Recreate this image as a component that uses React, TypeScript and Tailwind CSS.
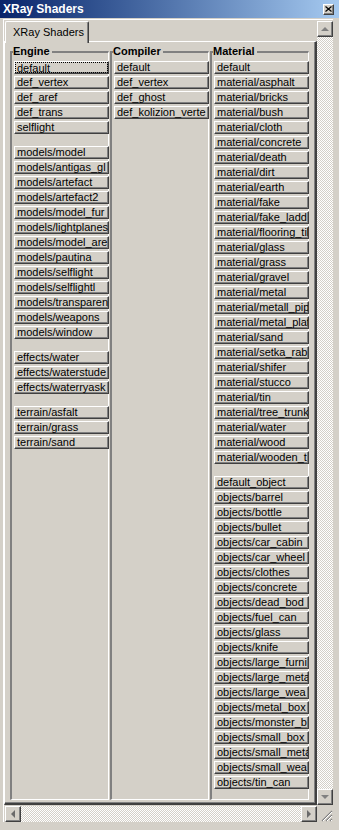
import clsx from 'clsx';

const ENGINE: string[][] = [
  ['default', 'def_vertex', 'def_aref', 'def_trans', 'selflight'],
  [
    'models/model',
    'models/antigas_gl',
    'models/artefact',
    'models/artefact2',
    'models/model_fur',
    'models/lightplanes',
    'models/model_are',
    'models/pautina',
    'models/selflight',
    'models/selflightl',
    'models/transparen',
    'models/weapons',
    'models/window',
  ],
  ['effects/water', 'effects/waterstude', 'effects/waterryask'],
  ['terrain/asfalt', 'terrain/grass', 'terrain/sand'],
];

const COMPILER: string[][] = [['default', 'def_vertex', 'def_ghost', 'def_kolizion_verte']];

const MATERIAL: string[][] = [
  [
    'default',
    'material/asphalt',
    'material/bricks',
    'material/bush',
    'material/cloth',
    'material/concrete',
    'material/death',
    'material/dirt',
    'material/earth',
    'material/fake',
    'material/fake_ladd',
    'material/flooring_til',
    'material/glass',
    'material/grass',
    'material/gravel',
    'material/metal',
    'material/metall_pip',
    'material/metal_plat',
    'material/sand',
    'material/setka_rab',
    'material/shifer',
    'material/stucco',
    'material/tin',
    'material/tree_trunk',
    'material/water',
    'material/wood',
    'material/wooden_t',
  ],
  [
    'default_object',
    'objects/barrel',
    'objects/bottle',
    'objects/bullet',
    'objects/car_cabin',
    'objects/car_wheel',
    'objects/clothes',
    'objects/concrete',
    'objects/dead_bod',
    'objects/fuel_can',
    'objects/glass',
    'objects/knife',
    'objects/large_furni',
    'objects/large_meta',
    'objects/large_wea',
    'objects/metal_box',
    'objects/monster_b',
    'objects/small_box',
    'objects/small_meta',
    'objects/small_wea',
    'objects/tin_can',
  ],
];

const raised =
  'border-t border-l border-t-white border-l-white border-b border-r border-b-[#404040] border-r-[#404040] shadow-[inset_-1px_-1px_0_#808080]';

function ShaderButton({ label, focused }: { label: string; focused?: boolean }) {
  return (
    <div className={clsx('h-[13px] w-[95px] ml-[1px] shrink-0 bg-[#d4d0c8] overflow-hidden', raised)}>
      <div
        className={clsx(
          'h-[11px] text-[11px] leading-[11px] whitespace-nowrap overflow-hidden text-black',
          focused ? 'border border-dotted border-black pl-[1px] leading-[9px]' : 'pl-[2px]'
        )}
      >
        {label}
      </div>
    </div>
  );
}

function ShaderColumn({ title, groups, focusFirst }: { title: string; groups: string[][]; focusFirst?: boolean }) {
  return (
    <fieldset className="min-w-0 m-0 p-0 pl-[1px] border-l-2 border-t-2 border-r border-b border-l-[#808080] border-t-[#808080] border-r-white border-b-white">
      <legend className="p-0 pr-[2px] text-[11px] leading-[11px] font-bold text-black">{title}</legend>
      <div className="flex flex-col gap-[12px] pt-[4px]">
        {groups.map((group, gi) => (
          <div key={gi} className="flex flex-col gap-[2px]">
            {group.map((label, i) => (
              <ShaderButton key={label + i} label={label} focused={focusFirst && gi === 0 && i === 0} />
            ))}
          </div>
        ))}
      </div>
    </fieldset>
  );
}

function Arrow({ dir }: { dir: 'up' | 'down' | 'left' | 'right' }) {
  const pts = {
    up: '4,1 0,5 8,5',
    down: '0,1 8,1 4,5',
    left: '5,0 5,8 1,4',
    right: '1,0 1,8 5,4',
  }[dir];
  const vertical = dir === 'up' || dir === 'down';
  return (
    <div className={clsx('w-[16px] h-[16px] shrink-0 bg-[#d4d0c8] flex items-center justify-center', raised)}>
      <svg width={vertical ? 8 : 6} height={vertical ? 6 : 8} viewBox={vertical ? '0 0 8 6' : '0 0 6 8'}>
        <polygon points={pts} fill={vertical ? '#808080' : '#6a6a6a'} />
      </svg>
    </div>
  );
}

const track =
  'bg-[repeating-conic-gradient(#ffffff_0%_25%,#d4d0c8_0%_50%)] [background-size:2px_2px]';

export default function App() {
  return (
    <div className="w-[339px] h-[830px] bg-[#d4d0c8] flex flex-col font-['Liberation_Sans',Arial,sans-serif] select-none overflow-hidden">
      {/* title bar */}
      <div className="h-[18px] shrink-0 flex items-center pl-[3px] pr-[5px] bg-gradient-to-r from-[#0a246a] to-[#a6caf0]">
        <span className="flex-1 text-white font-bold text-[12px] leading-[14px]">XRay Shaders</span>
        <div className={clsx('w-[11px] h-[11px] bg-[#d4d0c8] flex items-center justify-center', raised)}>
          <svg width="7" height="6" viewBox="0 0 7 6">
            <path d="M0.5 0.5 L6.5 5.5 M6.5 0.5 L0.5 5.5" stroke="#000" strokeWidth="1.2" />
          </svg>
        </div>
      </div>

      {/* frame */}
      <div className="mt-[1px] ml-[3px] w-[330px] border-t border-l border-white flex flex-col">
        <div className="flex">
          {/* page area */}
          <div className="w-[313px] flex flex-col">
            <div className="flex pt-[1px] pl-[1px] h-[22px]">
              <div className="relative z-10 w-[84px] h-[22px] bg-[#d4d0c8] border-t border-l border-white border-r border-r-[#404040] shadow-[inset_-1px_0_0_#808080] rounded-tl-[2px] rounded-tr-[2px] pl-[7px] pt-[4px] text-[11px] leading-[12px] text-black">
                XRay Shaders
              </div>
            </div>
            <div className="h-[764px] -mt-[1px] border-t border-l border-white border-r-2 border-b-2 border-r-[#404040] border-b-[#404040] shadow-[inset_-1px_-1px_0_#808080] pl-[5px] pr-[5px] pt-[4px] pb-[3px] grid grid-cols-[99px_99px_99px] gap-x-[1px]">
              <ShaderColumn title="Engine" groups={ENGINE} focusFirst />
              <ShaderColumn title="Compiler" groups={COMPILER} />
              <ShaderColumn title="Material" groups={MATERIAL} />
            </div>
          </div>

          {/* vertical scrollbar */}
          <div className="w-[16px] flex flex-col pt-[1px]">
            <Arrow dir="up" />
            <div className={clsx('flex-1', track)} />
            <Arrow dir="down" />
          </div>
        </div>

        {/* horizontal scrollbar */}
        <div className="flex mt-[1px] h-[16px]">
          <div className="w-[313px] flex pl-[1px]">
            <Arrow dir="left" />
            <div className={clsx('flex-1', track)} />
            <Arrow dir="right" />
          </div>
          <div className="w-[16px] h-[16px] flex items-end justify-end">
            <svg width="12" height="12" viewBox="0 0 12 12">
              <path d="M11 1 L1 11 M11 5 L5 11 M11 9 L9 11" stroke="#808080" strokeWidth="1.2" />
              <path d="M11 2 L2 11 M11 6 L6 11 M11 10 L10 11" stroke="#ffffff" strokeWidth="1" />
            </svg>
          </div>
        </div>
      </div>
    </div>
  );
}
